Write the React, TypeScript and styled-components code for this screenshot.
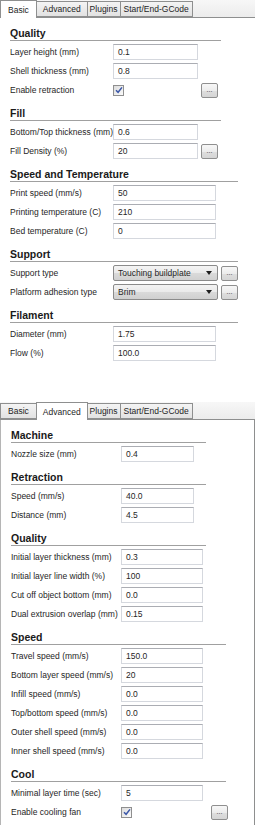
import styled, { createGlobalStyle } from "styled-components";

const GlobalStyle = createGlobalStyle`
  html, body {
    margin: 0;
    padding: 0;
    background: #ffffff;
  }
  body {
    font-family: "Liberation Sans", Arial, sans-serif;
    font-size: 8.5px;
    color: #262626;
  }
`;

const PageDiv = styled.div`
  width: 256px;
  height: 825px;
  display: flex;
  flex-direction: column;
  overflow: hidden;
`;

const PanelDiv = styled.div<{ $height?: number }>`
  display: flex;
  flex-direction: column;
  width: 255px;
  box-sizing: border-box;
  height: ${(p) => (p.$height ? `${p.$height}px` : "auto")};
  flex: ${(p) => (p.$height ? "none" : "1")};
`;

const TabBar = styled.div`
  display: flex;
  align-items: flex-end;
  height: 18px;
  background: linear-gradient(#f7f7f7, #ececec);
  border-bottom: 1px solid #8e8f8f;
  box-sizing: border-box;
`;

const Tab = styled.div<{ $active?: boolean; $pad: number }>`
  height: ${(p) => (p.$active ? "18px" : "16px")};
  margin-bottom: ${(p) => (p.$active ? "-1px" : "0")};
  padding: 0 ${(p) => p.$pad}px;
  display: flex;
  align-items: center;
  box-sizing: border-box;
  border: 1px solid #8e8f8f;
  border-bottom: ${(p) => (p.$active ? "none" : "1px solid #8e8f8f")};
  margin-right: -1px;
  background: ${(p) =>
    p.$active ? "#ffffff" : "linear-gradient(#f4f4f4, #e2e2e2)"};
  color: #1e1e1e;
  position: relative;
  z-index: ${(p) => (p.$active ? 1 : 0)};
`;

const Body = styled.div<{ $framed?: boolean }>`
  display: flex;
  flex-direction: column;
  padding: 0 0 8px 10px;
  flex: 1;
  border-left: ${(p) => (p.$framed ? "1px solid #b5b5b5" : "none")};
  border-right: ${(p) => (p.$framed ? "1px solid #8e8f8f" : "none")};
`;

const Section = styled.div`
  display: flex;
  flex-direction: column;
  row-gap: 3px;
  margin-top: 8px;
`;

const Heading = styled.div<{ $rule: number }>`
  width: ${(p) => p.$rule}px;
  height: 14px;
  font-weight: bold;
  font-size: 10.5px;
  color: #1a1a1a;
  border-bottom: 1px solid #a0a0a0;
  display: flex;
  align-items: center;
  line-height: 12px;
`;

const Row = styled.div<{ $labelWidth: number }>`
  display: grid;
  grid-template-columns: ${(p) => p.$labelWidth}px auto auto;
  justify-content: start;
  align-items: center;
  height: 16px;
`;

const Label = styled.span`
  white-space: nowrap;
`;

const Input = styled.div<{ $width: number }>`
  width: ${(p) => p.$width}px;
  height: 16px;
  box-sizing: border-box;
  border: 1px solid #d5d8de;
  border-top-color: #abadb3;
  background: #ffffff;
  padding-left: 4px;
  display: flex;
  align-items: center;
`;

const Check = styled.div`
  width: 11px;
  height: 11px;
  box-sizing: border-box;
  border: 1px solid #8f8f8f;
  background: linear-gradient(135deg, #dcdcdc, #fbfbfb);
  display: flex;
  align-items: center;
  justify-content: center;
`;

const Combo = styled.div<{ $width: number }>`
  width: ${(p) => p.$width}px;
  height: 16px;
  box-sizing: border-box;
  border: 1px solid #8b8b8b;
  border-radius: 2px;
  background: linear-gradient(#f4f4f4 0%, #eaeaea 50%, #dadada 51%, #d0d0d0 100%);
  padding: 0 5px 0 4px;
  display: flex;
  align-items: center;
  justify-content: space-between;
`;

const Arrow = styled.span`
  width: 0;
  height: 0;
  border-left: 3.5px solid transparent;
  border-right: 3.5px solid transparent;
  border-top: 4px solid #1e1e1e;
`;

const MoreButton = styled.div<{ $offset: number }>`
  margin-left: ${(p) => p.$offset}px;
  width: 17px;
  height: 15px;
  box-sizing: border-box;
  border: 1px solid #8f8f8f;
  border-radius: 2px;
  background: linear-gradient(#f7f7f7 0%, #ececec 50%, #dedede 51%, #d5d5d5 100%);
  display: flex;
  align-items: center;
  justify-content: center;
  font-size: 7px;
  line-height: 7px;
  color: #333;
  padding-bottom: 2px;
`;

const CheckMark = () => (
  <svg width="8" height="8" viewBox="0 0 8 8">
    <path d="M1 4.2 L3.1 6.3 L7 1.4" fill="none" stroke="#3b57a8" strokeWidth="1.5" />
  </svg>
);

type Field =
  | { label: string; value: string; more?: number }
  | { label: string; check: true; more?: number }
  | { label: string; combo: string; more?: number };

type SectionDef = {
  title: string;
  rule: number;
  input: number;
  fields: Field[];
};

const basicSections: SectionDef[] = [
  {
    title: "Quality",
    rule: 211,
    input: 85,
    fields: [
      { label: "Layer height (mm)", value: "0.1" },
      { label: "Shell thickness (mm)", value: "0.8" },
      { label: "Enable retraction", check: true, more: 77 },
    ],
  },
  {
    title: "Fill",
    rule: 211,
    input: 85,
    fields: [
      { label: "Bottom/Top thickness (mm)", value: "0.6" },
      { label: "Fill Density (%)", value: "20", more: 3 },
    ],
  },
  {
    title: "Speed and Temperature",
    rule: 228,
    input: 103,
    fields: [
      { label: "Print speed (mm/s)", value: "50" },
      { label: "Printing temperature (C)", value: "210" },
      { label: "Bed temperature (C)", value: "0" },
    ],
  },
  {
    title: "Support",
    rule: 228,
    input: 105,
    fields: [
      { label: "Support type", combo: "Touching buildplate", more: 3 },
      { label: "Platform adhesion type", combo: "Brim", more: 3 },
    ],
  },
  {
    title: "Filament",
    rule: 228,
    input: 103,
    fields: [
      { label: "Diameter (mm)", value: "1.75" },
      { label: "Flow (%)", value: "100.0" },
    ],
  },
];

const advancedSections: SectionDef[] = [
  {
    title: "Machine",
    rule: 195,
    input: 73,
    fields: [{ label: "Nozzle size (mm)", value: "0.4" }],
  },
  {
    title: "Retraction",
    rule: 195,
    input: 73,
    fields: [
      { label: "Speed (mm/s)", value: "40.0" },
      { label: "Distance (mm)", value: "4.5" },
    ],
  },
  {
    title: "Quality",
    rule: 195,
    input: 82,
    fields: [
      { label: "Initial layer thickness (mm)", value: "0.3" },
      { label: "Initial layer line width (%)", value: "100" },
      { label: "Cut off object bottom (mm)", value: "0.0" },
      { label: "Dual extrusion overlap (mm)", value: "0.15" },
    ],
  },
  {
    title: "Speed",
    rule: 215,
    input: 82,
    fields: [
      { label: "Travel speed (mm/s)", value: "150.0" },
      { label: "Bottom layer speed (mm/s)", value: "20" },
      { label: "Infill speed (mm/s)", value: "0.0" },
      { label: "Top/bottom speed (mm/s)", value: "0.0" },
      { label: "Outer shell speed (mm/s)", value: "0.0" },
      { label: "Inner shell speed (mm/s)", value: "0.0" },
    ],
  },
  {
    title: "Cool",
    rule: 215,
    input: 82,
    fields: [
      { label: "Minimal layer time (sec)", value: "5" },
      { label: "Enable cooling fan", check: true, more: 79 },
    ],
  },
];

const tabs = [
  { name: "Basic", pad: 7 },
  { name: "Advanced", pad: 6 },
  { name: "Plugins", pad: 2 },
  { name: "Start/End-GCode", pad: 3 },
];

const SettingsPanel = ({
  active,
  sections,
  labelWidth,
  framed,
  height,
}: {
  active: number;
  sections: SectionDef[];
  labelWidth: number;
  framed?: boolean;
  height?: number;
}) => (
  <PanelDiv $height={height}>
    <TabBar>
      {tabs.map((t, i) => (
        <Tab key={t.name} $active={i === active} $pad={t.pad}>
          {t.name}
        </Tab>
      ))}
    </TabBar>
    <Body $framed={framed}>
      {sections.map((s) => (
        <Section key={s.title}>
          <Heading $rule={s.rule}>{s.title}</Heading>
          {s.fields.map((f) => (
            <Row key={f.label} $labelWidth={labelWidth}>
              <Label>{f.label}</Label>
              {"value" in f && <Input $width={s.input}>{f.value}</Input>}
              {"check" in f && (
                <Check>
                  <CheckMark />
                </Check>
              )}
              {"combo" in f && (
                <Combo $width={s.input}>
                  {f.combo}
                  <Arrow />
                </Combo>
              )}
              {f.more !== undefined && <MoreButton $offset={f.more}>...</MoreButton>}
            </Row>
          ))}
        </Section>
      ))}
    </Body>
  </PanelDiv>
);

export default function App() {
  return (
    <>
      <GlobalStyle />
      <PageDiv>
        <SettingsPanel active={0} sections={basicSections} labelWidth={103} height={402} />
        <SettingsPanel active={1} sections={advancedSections} labelWidth={110} framed />
      </PageDiv>
    </>
  );
}
